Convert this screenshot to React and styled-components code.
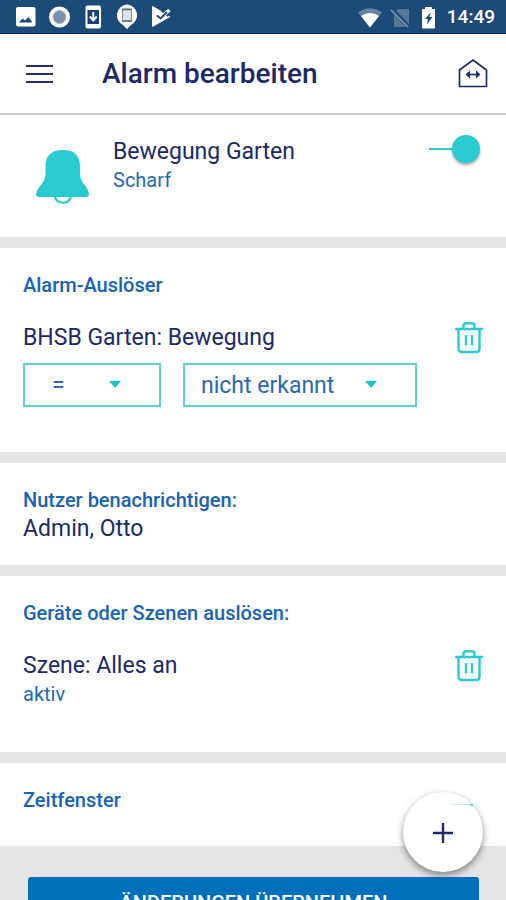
import { useState } from "react"
import styled, { createGlobalStyle } from "styled-components"

const TrashIcon = () => (
	<svg width="28" height="32" viewBox="0 0 28 32" fill="none" stroke="currentColor" strokeWidth="2.4" aria-hidden="true">
		<path d="M1.200 7H26.800" strokeLinecap="round" />
		<path d="M8.500 7V4Q8.500 1.200 11.500 1.200H16.500Q19.500 1.200 19.500 4V7" />
		<path d="M3.500 7V26.500Q3.500 30 7 30H21Q24.500 30 24.500 26.500V7" />
		<path d="M11 13V23.500M17 13V23.500" />
	</svg>
)

const BellIcon = () => (
	<svg width="54" height="56" viewBox="0 0 54 56" aria-hidden="true">
		<path d="M9.500 18C9.500 5 17 1 27 1S44 5 44 18V24C44 35 52 36 53 45Q53 48 50 48H3Q0 48 0 45C2 36 9.500 35 9.500 24Z" fill="#2acbce" />
		<path d="M18.500 47C21 56 33 56 35 47" fill="none" stroke="#2acbce" strokeWidth="2.200" />
	</svg>
)

const HomeIcon = () => (
	<svg width="30" height="30" viewBox="0 0 30 30" fill="none" stroke="currentColor" aria-hidden="true">
		<path d="M1.500 27.500V11L15 1L28.500 11V27.500Z" strokeWidth="1.700" />
		<path d="M10 15.500H20" strokeWidth="1.700" />
		<path d="M7.500 15.500L12 11.500V19.500ZM22.500 15.500L18 11.500V19.500Z" fill="currentColor" stroke="none" />
	</svg>
)

const NotificationIcons = () => (
	<svg width="156" height="25" viewBox="0 0 156 25" aria-hidden="true">
		<rect x="0" y="3" width="19.500" height="19.500" rx="2" fill="#fff" />
		<path d="M3 18.500L6.500 14.500L9 16.500L12.500 13L16.500 18.500Z" fill="#1d4b78" />
		<circle cx="43.500" cy="13" r="10.500" fill="#fff" />
		<circle cx="43.500" cy="13" r="6.500" fill="#7890ac" stroke="#a3b4c7" />
		<rect x="69.500" y="1.500" width="15.500" height="23" rx="2" fill="#fff" />
		<rect x="71.500" y="6" width="11.500" height="14" fill="#173f78" />
		<path d="M77.250 8V15M73.800 12.500L77.250 16.500L80.700 12.500" fill="none" stroke="#fff" strokeWidth="2" />
		<path d="M111 .5A10.800 10.800 0 0 1 115 21L111 25L107 21A10.800 10.800 0 0 1 111 .5Z" fill="#fff" />
		<rect x="106.500" y="5" width="9" height="12.500" rx="1" fill="#dce1e8" stroke="#7f8fa3" />
		<path d="M106 5.500H116M106 17H116" stroke="#52667f" strokeWidth="1.600" />
		<path d="M136.500 2.500L153 12L154 12.500L136.500 22.500Z" fill="#fff" stroke="#fff" strokeLinejoin="round" />
		<path d="M145 7.500L150 2L156 9L152 13Z" fill="#1d4b78" />
		<path d="M144 14L153.500 6" stroke="#fff" strokeWidth="3.500" />
		<path d="M141 11.500L144.500 14.500L151 8" fill="none" stroke="#1d4b78" strokeWidth="1.800" />
	</svg>
)

const SystemIcons = () => (
	<svg width="80" height="24" viewBox="0 0 80 24" aria-hidden="true">
		<path d="M0 7.500Q12 -1 24 7.500L12 22.500Z" fill="#6583a2" />
		<path d="M3 11Q12 5 21 11L12 22.500Z" fill="#fff" />
		<path d="M40 4H51V22H36V9Z" fill="#587898" />
		<path d="M33.500 4L50.500 21.500" stroke="#1d4b78" strokeWidth="4" />
		<path d="M33 5L50 22" stroke="#7d96b0" strokeWidth="1.700" />
		<path d="M67.500 2.500H73.500V4.500H76.500V23H64.500V4.500H67.500Z" fill="#fff" stroke="#fff" strokeLinejoin="round" />
		<path d="M72.500 7.500L67 14H70L69 19.500L74.500 12H71.500Z" fill="#1d4b78" />
	</svg>
)

const App = () => {
	const [armed, setArmed] = useState(true)
	const [operator, setOperator] = useState("=")
	const [state, setState] = useState("nicht erkannt")

	return (
		<Page>
			<GlobalStyle />
			<StatusBar>
				<NotificationIcons />
				<System>
					<SystemIcons />
					<time>14:49</time>
				</System>
			</StatusBar>
			<AppBar>
				<MenuButton aria-label="Menü">
					<span />
					<span />
					<span />
				</MenuButton>
				<h1>Alarm bearbeiten</h1>
				<IconButton aria-label="Zuhause">
					<HomeIcon />
				</IconButton>
			</AppBar>
			<Content>
				<AlarmCard>
					<BellIcon />
					<div>
						<Value as="label" htmlFor="armed">Bewegung Garten</Value>
						<Status>Scharf</Status>
					</div>
					<Switch id="armed" type="checkbox" checked={armed} onChange={() => setArmed(!armed)} />
				</AlarmCard>

				<Card $bottom={45}>
					<Label>Alarm-Auslöser</Label>
					<Item>
						<Value>BHSB Garten: Bewegung</Value>
						<IconButton $teal aria-label="Auslöser löschen">
							<TrashIcon />
						</IconButton>
					</Item>
					<Selects>
						<SelectBox $width={138} $indent={27}>
							<select aria-label="Vergleich" value={operator} onChange={(e) => setOperator(e.target.value)}>
								<option>=</option>
								<option>≠</option>
							</select>
							<Arrow />
						</SelectBox>
						<SelectBox $width={234} $indent={16}>
							<select aria-label="Zustand" value={state} onChange={(e) => setState(e.target.value)}>
								<option>nicht erkannt</option>
								<option>erkannt</option>
							</select>
							<Arrow />
						</SelectBox>
					</Selects>
				</Card>

				<Card $bottom={20}>
					<Label>Nutzer benachrichtigen:</Label>
					<Value>Admin, Otto</Value>
				</Card>

				<Card $bottom={46}>
					<Label>Geräte oder Szenen auslösen:</Label>
					<Item>
						<Value>Szene: Alles an</Value>
						<IconButton $teal aria-label="Szene löschen">
							<TrashIcon />
						</IconButton>
					</Item>
					<Status>aktiv</Status>
				</Card>

				<Card $bottom={34}>
					<Label>Zeitfenster</Label>
				</Card>
			</Content>
			<Footer>
				<SaveButton>ÄNDERUNGEN ÜBERNEHMEN</SaveButton>
			</Footer>
			<AddButton aria-label="Hinzufügen">
				<svg width="80" height="80" viewBox="0 0 80 80" aria-hidden="true">
					<path d="M48 12.500H68" stroke="#c5eff1" />
					<path d="M66 12L70 12.500L69.500 14.500Z" fill="#2acbce" />
					<path d="M30 41H50M40 31V51" stroke="#1c2b6b" strokeWidth="2.400" />
				</svg>
			</AddButton>
		</Page>
	)
}

const Arrow = () => (
	<svg width="12" height="7" viewBox="0 0 12 7" aria-hidden="true">
		<path d="M0 0H12L6 7Z" fill="#16c6c8" />
	</svg>
)

const GlobalStyle = createGlobalStyle`
	* {
		box-sizing: border-box;
	}

	body {
		margin: 0;
		font-family: Roboto, "Liberation Sans", sans-serif;
		color: #1b2a66;
	}

	button, select {
		font-family: inherit;
	}
`

const Page = styled.div`
	position: relative;
	display: flex;
	flex-direction: column;
	height: 100vh;
	overflow: hidden;
	background: #e5e5e7;

	> * {
		flex-shrink: 0;
	}
`

const StatusBar = styled.div`
	display: flex;
	align-items: center;
	justify-content: space-between;
	height: 34px;
	padding: 0 11px 0 16px;
	background: #1d4b78;
	border-bottom: 1px solid #10206a;
`

const System = styled.div`
	display: flex;
	align-items: center;
	gap: 9px;
	color: #fff;
	font-size: 19px;
	font-weight: 500;
`

const AppBar = styled.header`
	display: flex;
	align-items: center;
	height: 81px;
	padding: 0 18px 0 26px;
	background: #fff;
	border-bottom: 2px solid #cbcccd;

	h1 {
		flex: 1;
		margin: 0 0 0 49px;
		font-size: 28px;
		line-height: 32px;
		font-weight: 500;
	}
`

const MenuButton = styled.button`
	display: flex;
	flex-direction: column;
	gap: 6px;
	width: 27px;
	padding: 0;
	background: none;
	border: 0;

	span {
		height: 2px;
		background: #232f70;
	}
`

const IconButton = styled.button`
	display: flex;
	padding: 0;
	background: none;
	border: 0;
	color: ${({ $teal }) => ($teal ? "#2acbce" : "#1c2b6b")};
`

const Content = styled.main`
	display: grid;
	gap: 11px;
`

const Card = styled.section`
	padding: 25px 23px ${({ $bottom }) => $bottom}px;
	background: #fff;
`

const AlarmCard = styled.section`
	display: flex;
	align-items: flex-start;
	gap: 23px;
	padding: 20px 26px 32px 36px;
	background: #fff;

	> svg {
		margin-top: 14px;
	}

	> div {
		flex: 1;
	}
`

const Label = styled.h2`
	margin: 0;
	font-size: 20px;
	line-height: 24px;
	font-weight: 500;
	color: #1763b5;
`

const Value = styled.div`
	display: block;
	padding-top: 1px;
	font-size: 23px;
	line-height: 32px;
`

const Status = styled.div`
	font-size: 20px;
	line-height: 24px;
	color: #1f69b5;
`

const Item = styled.div`
	display: flex;
	align-items: center;
	justify-content: space-between;
	margin-top: 24px;
`

const Switch = styled.input`
	appearance: none;
	display: flex;
	align-items: center;
	width: 51px;
	height: 28px;
	margin: 0;
	background: linear-gradient(#2acbce, #2acbce) center / 100% 2px no-repeat;

	&::before {
		content: "";
		width: 28px;
		height: 28px;
		border-radius: 50%;
		background: #2acbce;
		box-shadow: 0 2px 3px rgba(0, 0, 0, 0.35);
	}

	&:checked::before {
		margin-left: auto;
	}
`

const Selects = styled.div`
	display: flex;
	gap: 22px;
	margin-top: 9px;
`

const SelectBox = styled.div`
	position: relative;
	flex: 0 1 ${({ $width }) => $width}px;

	select {
		appearance: none;
		display: block;
		width: 100%;
		height: 44px;
		padding: 0 60px 0 ${({ $indent }) => $indent}px;
		background: #fff;
		border: 2px solid #62d0d3;
		border-radius: 0;
		font-size: 23px;
		color: #2d68b2;
	}

	svg {
		position: absolute;
		top: 18px;
		right: 40px;
		pointer-events: none;
	}
`

const Footer = styled.footer`
	padding: 31px 27px 31px 28px;
`

const SaveButton = styled.button`
	width: 100%;
	height: 52px;
	background: #0070bd;
	border: 0;
	border-radius: 3px;
	color: #fff;
	font-size: 20px;
	font-weight: 500;
`

const AddButton = styled.button`
	position: absolute;
	right: 23px;
	bottom: 28px;
	width: 80px;
	height: 80px;
	padding: 0;
	background: #fff;
	border: 0;
	border-radius: 50%;
	box-shadow: 0 3px 7px rgba(0, 0, 0, 0.45);
`

export default App
